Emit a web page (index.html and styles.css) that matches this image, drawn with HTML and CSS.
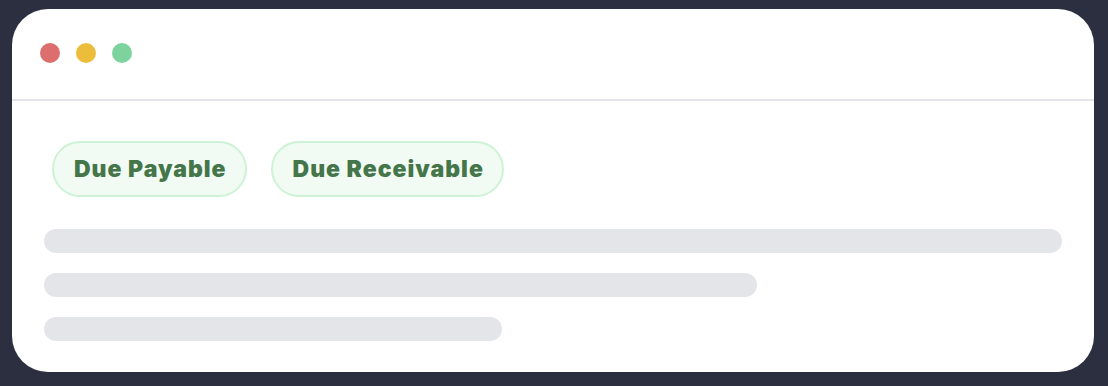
FILE: index.html
```html
<!DOCTYPE html>
<html lang="en">
<head>
  <meta charset="UTF-8">
  <meta name="viewport" content="width=device-width, initial-scale=1">
  <title>due items</title>

  <link rel="stylesheet" href="styles.css">
</head>

<body>

  <div class="window">
    <div class="window-top">
      <span class="dot dot-red"></span>
      <span class="dot dot-yellow"></span>
      <span class="dot dot-green"></span>
    </div>

    <div class="window-content">
      <div class="chips">
        <span class="chip">Due Payable</span>
        <span class="chip">Due Receivable</span>
      </div>

      <div class="skeleton">
        <div class="bar bar-full"></div>
        <div class="bar bar-wide"></div>
        <div class="bar bar-short"></div>
      </div>
    </div>
  </div>

</body>
</html>
```

FILE: styles.css
```css
body {
  font-family: 'Inter', 'Noto Sans', sans-serif;
  margin: 0;
  padding: 9px 14px 14px 12px;
  background: #2b2f3f;
  height: 100vh;
  box-sizing: border-box;
  overflow: hidden;
}

.window {
  background: white;
  border-radius: 36px;
  height: 363px;
  overflow: hidden;
}

.window-top {
  display: flex;
  gap: 16px;
  padding: 34px 28px 36px;
  border-bottom: 2px solid #e5e5ea;
}

.dot {
  width: 20px;
  height: 20px;
  border-radius: 50%;
}

.dot-red {
  background: #dc6e6e;
}

.dot-yellow {
  background: #ecbd3b;
}

.dot-green {
  background: #7dd39d;
}

.window-content {
  padding: 40px 32px 0;
}

.chips {
  display: flex;
  gap: 24px;
  padding-left: 8px;
  margin-bottom: 32px;
}

.chip {
  display: inline-block;
  padding: 13px 18px 13px 20px;
  line-height: 26px;
  font-size: 23px;
  font-weight: 900;
  letter-spacing: 1px;
  color: #44764a;
  background: #f1fbf3;
  border: 2px solid #cdf3d5;
  border-radius: 30px;
}

.skeleton {
  display: flex;
  flex-direction: column;
  gap: 20px;
}

.bar {
  height: 24px;
  border-radius: 12px;
  background: #e4e5e9;
}

.bar-full {
  width: 100%;
}

.bar-wide {
  width: 70%;
}

.bar-short {
  width: 45%;
}
```
